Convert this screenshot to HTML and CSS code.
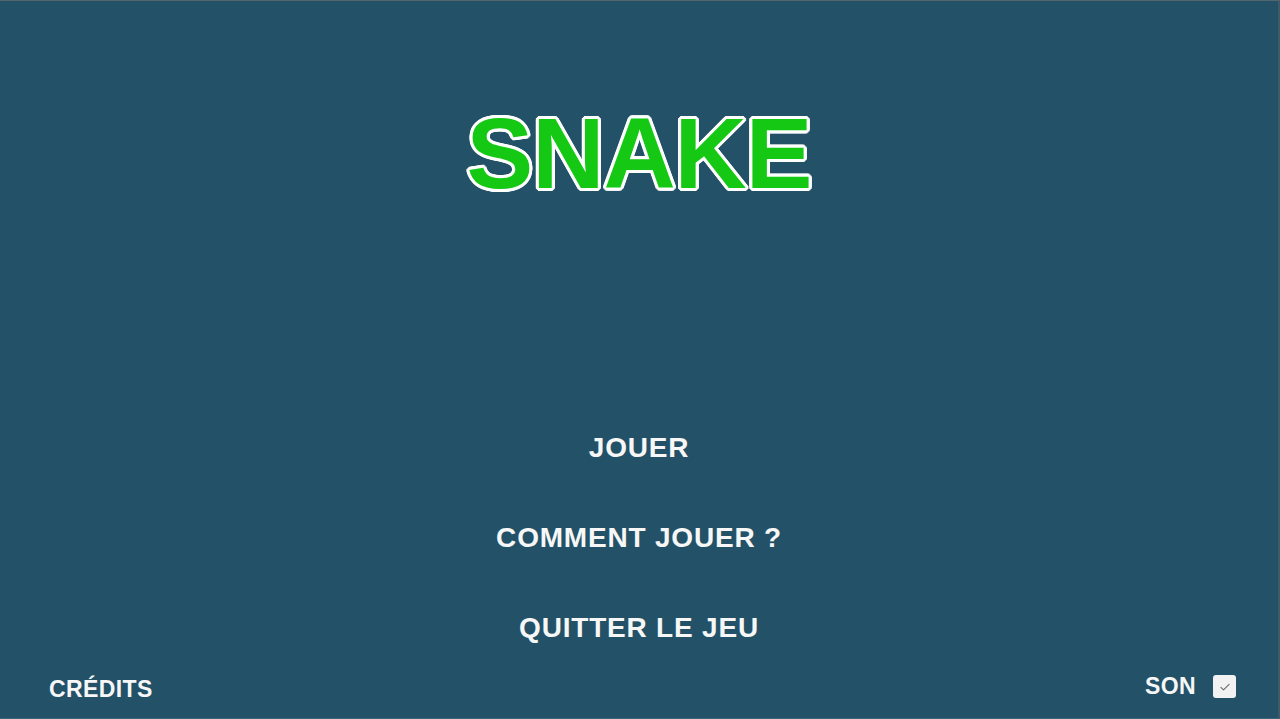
FILE: index.html
```html
<!DOCTYPE html>
<html lang="fr">
<head>
  <meta charset="UTF-8">
  <meta name="viewport" content="width=device-width, initial-scale=1.0">
  <title>Snake</title>
  <link rel="stylesheet" href="styles.css">
</head>
<body>
  <div class="screen">
    <header class="title-area">
      <h1 class="game-title">SNAKE</h1>
    </header>

    <nav class="menu">
      <a href="#" class="menu-item">JOUER</a>
      <a href="#" class="menu-item">COMMENT JOUER ?</a>
      <a href="#" class="menu-item">QUITTER LE JEU</a>
    </nav>

    <footer class="footer">
      <a href="#" class="credits">CRÉDITS</a>
      <label class="sound-toggle">
        <span class="sound-label">SON</span>
        <span class="checkbox">
          <svg viewBox="0 0 24 24" width="14" height="14">
            <path d="M5 12.5l4.5 4.5L19 7.5" fill="none" stroke="#6b6b6b" stroke-width="1.8" stroke-linecap="round" stroke-linejoin="round"/>
          </svg>
        </span>
      </label>
    </footer>
  </div>
</body>
</html>
```

FILE: styles.css
```css
html, body {
  margin: 0;
  padding: 0;
}

body {
  font-family: "Liberation Sans", Arial, sans-serif;
  background: #235268;
  color: #f7f7f7;
}

.screen {
  height: 100vh;
  box-sizing: border-box;
  border-top: 1px solid #55656d;
  border-right: 2px solid #3e5b69;
  border-bottom: 1px solid #3a6578;
  display: flex;
  flex-direction: column;
}

.title-area {
  display: flex;
  justify-content: center;
  margin-top: 102px;
}

.game-title {
  margin: 0;
  font-size: 100px;
  line-height: 1;
  font-weight: 700;
  letter-spacing: -1px;
  color: #14c814;
  text-shadow:
    3px 0 0 #fff, -3px 0 0 #fff, 0 3px 0 #fff, 0 -3px 0 #fff,
    2px 2px 0 #fff, -2px 2px 0 #fff, 2px -2px 0 #fff, -2px -2px 0 #fff,
    3px 1px 0 #fff, -3px 1px 0 #fff, 3px -1px 0 #fff, -3px -1px 0 #fff,
    1px 3px 0 #fff, -1px 3px 0 #fff, 1px -3px 0 #fff, -1px -3px 0 #fff;
}

.menu {
  display: flex;
  flex-direction: column;
  align-items: center;
  gap: 62px;
  margin-top: 231px;
}

.menu-item {
  font-size: 28px;
  line-height: 1;
  font-weight: 700;
  letter-spacing: 0.8px;
  color: #f7f7f7;
  text-decoration: none;
}

.footer {
  display: flex;
  justify-content: space-between;
  align-items: center;
  margin-top: 30px;
  padding: 0 42px 0 49px;
}

.credits {
  font-size: 23px;
  line-height: 1;
  font-weight: 700;
  letter-spacing: 0.4px;
  color: #f7f7f7;
  text-decoration: none;
  margin-top: 6px;
}

.sound-toggle {
  display: flex;
  align-items: center;
  gap: 17px;
}

.sound-label {
  font-size: 23px;
  line-height: 1;
  font-weight: 700;
  letter-spacing: 0.4px;
}

.checkbox {
  width: 23px;
  height: 23px;
  border-radius: 3px;
  background: #f2f2f2;
  display: flex;
  align-items: center;
  justify-content: center;
}
```
